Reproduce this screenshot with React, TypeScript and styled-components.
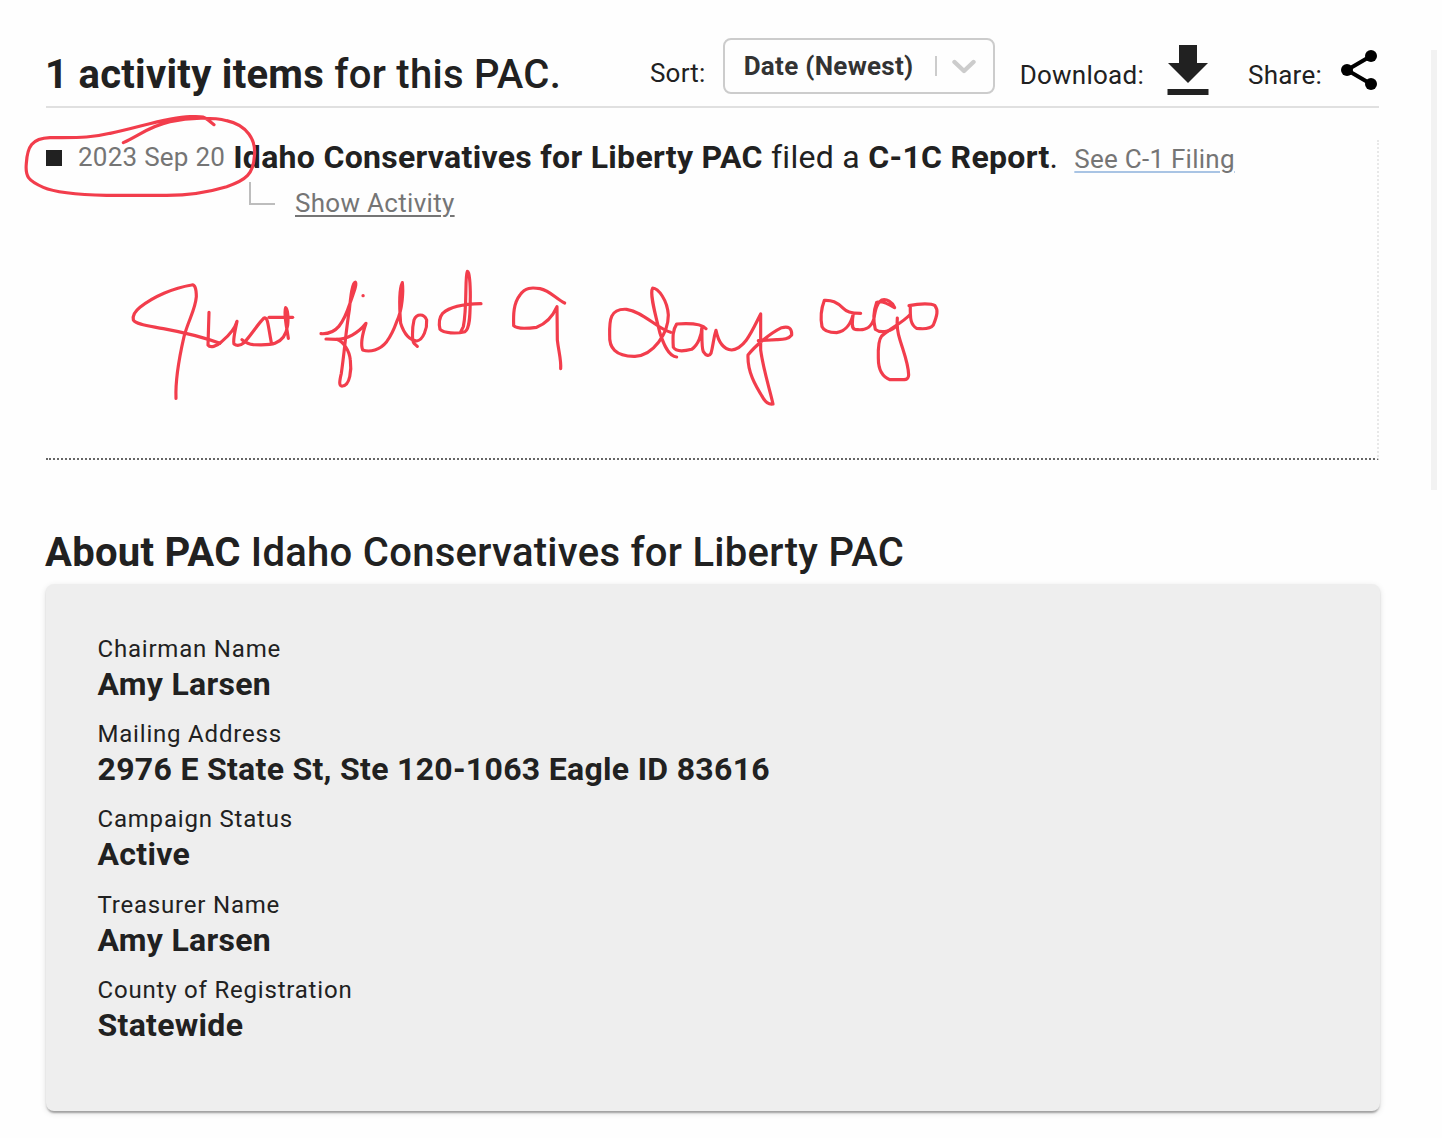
import styled, { createGlobalStyle } from "styled-components";

const details = [
  { label: "Chairman Name", value: "Amy Larsen" },
  { label: "Mailing Address", value: "2976 E State St, Ste 120-1063 Eagle ID 83616" },
  { label: "Campaign Status", value: "Active" },
  { label: "Treasurer Name", value: "Amy Larsen" },
  { label: "County of Registration", value: "Statewide" },
];

const Notes = () => (
  <NotesSvg viewBox="0 0 1442 500">
    {/* circle around the date */}
    <g transform="translate(0 30) scale(0.33333)">
      <path d="M370 338 C420 315 450 288 510 275 C570 262 640 262 680 272 C740 285 770 330 763 380 C760 430 740 450 680 470 C620 488 560 496 500 496 L320 496 C240 494 170 490 130 472 C85 452 75 440 79 400 C82 350 95 325 150 323 C220 322 270 325 330 310 C420 292 500 262 570 260 C615 258 612 260 642 284" />
    </g>
    {/* just filed */}
    <g transform="translate(120 260) scale(0.33333)">
      <path d="M168 415 C166 370 176 300 192 230 C205 180 226 150 229 110 C229 85 224 72 215 75 C160 84 100 110 60 142 C40 158 38 170 40 180 C48 194 90 198 130 206 C190 217 250 232 300 250" />
      <path d="M267 157 L264 255 C270 264 290 260 305 245 C325 228 345 205 351 184 C345 215 338 240 342 252 C350 258 362 256 372 248 C390 230 415 190 432 174 C444 172 443 190 454 248" />
      <path d="M366 239 C375 246 385 253 400 254 C430 255 450 256 465 250 C490 240 500 220 503 195 C506 170 502 145 497 143 C490 160 500 200 505 235" />
      <path d="M447 172 L518 172" />
      <path d="M603 221 C650 224 670 190 690 130 C700 100 712 72 706 66 C697 66 692 110 688 150 C678 210 674 270 664 340 C658 365 656 380 668 378 C690 376 695 330 691 300 C688 270 670 245 650 238 L618 237" />
      <path d="M650 238 C680 238 715 220 738 190 C728 220 720 250 728 270 C750 278 780 270 800 245 C812 228 822 208 830 185 C848 150 850 90 847 68 C836 90 838 140 842 190 C850 215 865 240 890 243 C910 240 922 205 920 180 C912 160 890 160 882 180 C876 205 876 245 882 250 L892 259" />
      <path d="M729 107 L729.5 107" />
    </g>
    {/* a */}
    <g transform="translate(390 260) scale(0.33333)">
      <path d="M273 131 C220 132 180 140 158 160 C146 175 146 190 150 208 C160 220 200 222 225 215 C242 205 240 150 241 110 C241 70 238 33 232 34 C224 50 232 140 220 200 L212 216" />
      <path d="M524 129 C500 118 480 92 450 86 C425 82 405 82 390 105 C370 130 370 165 371 197 C380 207 410 206 440 202 C470 190 490 165 501 140 L502 240 C506 275 514 300 512 326" />
    </g>
    {/* day ago */}
    <g transform="translate(660 260) scale(0.33333)">
      <path d="M32 217 C-10 205 -50 155 -100 148 C-150 145 -152 180 -151 225 C-153 262 -135 290 -75 289 C-20 287 25 220 25 165 C22 120 -5 85 -22 84 C-32 100 -15 160 0 220 C10 250 25 290 50 291" />
      <path d="M138 206 C125 190 80 190 50 192 C38 210 38 230 40 262 C48 276 75 273 95 268 C115 255 125 225 126 198 C126 225 124 260 130 275 C138 288 148 290 153 280 C160 255 160 235 168 211 C175 245 190 268 215 270 C255 265 275 215 302 162 L302 270 C310 330 330 390 339 432 C328 434 318 428 310 415 C285 375 262 335 264 285 C285 258 330 220 365 203 C385 198 396 203 395 225 C385 238 370 238 350 239 L295 242" />
      <path d="M602 160 C570 160 560 155 550 145 C530 125 515 120 493 121 C482 150 482 180 486 200 C492 215 510 218 530 218 C560 213 575 185 580 160 C576 185 573 205 585 208 C620 214 635 200 642 175 C646 150 650 130 665 120 C680 116 697 125 704 143 C690 135 665 120 650 127 C640 155 640 185 646 208 C660 220 690 215 704 203" />
      <path d="M712 174 C710 195 712 215 720 240 C732 280 745 310 746 345 C745 358 740 359 720 359 L690 359 C665 350 655 325 655 295 C654 265 655 240 665 228 C690 205 725 190 749 165" />
      <path d="M747 137 C780 130 815 130 825 137 C835 150 832 165 820 195 C810 208 785 207 770 205 C752 195 750 175 751 137" />
    </g>
  </NotesSvg>
);

const App = () => {
  return (
    <>
      <GlobalStyle />
      <Page>
        <Top>
          <Activity>
            <Header>
              <Title>
                <b>1 activity items</b> for this PAC.
              </Title>
              <Tools>
                <ToolLabel $shift={5}>Sort:</ToolLabel>
                <Select>
                  <span>Date (Newest)</span>
                  <Divider />
                  <svg width="24" height="16" viewBox="0 0 24 16">
                    <path d="M2.5 4 L12 13 L21.5 4" fill="none" stroke="#ccc" strokeWidth="4.4" strokeLinecap="round" strokeLinejoin="round" />
                  </svg>
                </Select>
                <ToolLabel $shift={7}>Download:</ToolLabel>
                <DownloadSvg viewBox="0 0 42 50">
                  <path d="M12 0 H30 V18 H41 L21 38 L1 18 H12 Z M0.5 44 H41.5 V50 H0.5 Z" fill="#212121" />
                </DownloadSvg>
                <ToolLabel $shift={7}>Share:</ToolLabel>
                <ShareSvg viewBox="0 0 36 40">
                  <path d="M30 6 L6 20 L30 34" fill="none" stroke="#000" strokeWidth="4" />
                  <circle cx="30" cy="6" r="6" />
                  <circle cx="6" cy="20" r="6" />
                  <circle cx="30" cy="34" r="6" />
                </ShareSvg>
              </Tools>
            </Header>
            <List>
              <Item>
                <Bullet />
                <ItemDate>2023 Sep 20</ItemDate>
                <Message>
                  <b>Idaho Conservatives for Liberty PAC</b> filed a <b>C-1C Report</b>.
                </Message>
                <FilingLink>See C-1 Filing</FilingLink>
              </Item>
              <SubItem>
                <Branch />
                <ShowLink>Show Activity</ShowLink>
              </SubItem>
            </List>
          </Activity>
          <Scrollbar />
        </Top>
        <AboutTitle>
          <b>About PAC</b> Idaho Conservatives for Liberty PAC
        </AboutTitle>
        <Card>
          {details.map((item) => (
            <Detail key={item.label}>
              <div className="label">{item.label}</div>
              <div className="value">{item.value}</div>
            </Detail>
          ))}
        </Card>
        <Notes />
      </Page>
    </>
  );
};

export default App;

const GlobalStyle = createGlobalStyle`
  * {
    box-sizing: border-box;
  }

  body {
    margin: 0;
    background: #fefefe;
    color: #212121;
    font-family: Roboto, "Liberation Sans", sans-serif;
  }

  b {
    font-weight: 700;
  }
`;

const Page = styled.main`
  position: relative;
  width: 1442px;
  height: 1138px;
  padding-left: 46px;
  overflow: hidden;
`;

const Top = styled.section`
  display: flex;
  gap: 52px;
  height: 490px;
`;

const Activity = styled.div`
  width: 1333px;
`;

const Header = styled.header`
  height: 108px;
  border-bottom: 2px solid #e0e0e0;

  display: flex;
  justify-content: space-between;
`;

const Title = styled.h1`
  margin: 43px 0 0 -1px;
  font-size: 40px;
  font-weight: 500;
  line-height: 64px;
  letter-spacing: 0.28px;
  white-space: nowrap;
`;

const Tools = styled.div`
  margin-top: 38px;
  display: flex;
  align-items: flex-start;
`;

const ToolLabel = styled.span<{ $shift: number }>`
  padding-top: ${(props) => props.$shift}px;
  font-size: 26px;
  line-height: 60px;
  letter-spacing: 0.25px;
`;

const Select = styled.div`
  width: 272px;
  height: 56px;
  margin: 0 25px 0 17px;
  padding-left: 19px;
  border: 2px solid #ccc;
  border-radius: 8px;

  display: flex;
  align-items: center;

  color: #333;
  font-size: 26px;
  font-weight: 700;
  letter-spacing: 0.3px;

  span {
    width: 177px;
    white-space: nowrap;
  }
`;

const Divider = styled.i`
  width: 2px;
  height: 20px;
  margin: 0 15px 0 14px;
  background: #ccc;
`;

const DownloadSvg = styled.svg`
  width: 42px;
  height: 50px;
  margin: 7px 39px 0 23px;
`;

const ShareSvg = styled.svg`
  width: 36px;
  height: 40px;
  margin: 12px 2px 0 19px;
`;

const List = styled.div`
  height: 320px;
  margin-top: 32px;
  border-right: 2px dotted #e8e8e8;
  border-bottom: 2px dotted #666;
`;

const Item = styled.div`
  height: 36px;
  display: flex;
  align-items: center;
  white-space: nowrap;
`;

const Bullet = styled.i`
  width: 16px;
  height: 16px;
  background: #212121;
`;

const ItemDate = styled.span`
  margin: -3px 8px 0 16px;
  color: #757575;
  font-size: 26px;
  letter-spacing: 0.25px;
`;

const Message = styled.span`
  font-size: 32px;
  letter-spacing: 0.3px;
  margin-top: -2px;
`;

const FilingLink = styled.a`
  margin: 2px 0 0 16px;
  color: #757575;
  font-size: 26px;
  letter-spacing: 0.25px;
  text-decoration: underline;
  text-decoration-color: #a9c4e4;
  text-decoration-thickness: 2px;
  text-underline-offset: 3px;
`;

const SubItem = styled.div`
  height: 50px;
  padding-left: 203px;
  display: flex;
`;

const Branch = styled.i`
  width: 26px;
  height: 23px;
  margin-top: 6px;
  border: solid #bdbdbd;
  border-width: 0 0 2px 2px;
`;

const ShowLink = styled.a`
  margin-left: 20px;
  color: #757575;
  font-size: 26px;
  line-height: 54px;
  letter-spacing: 0.3px;
  text-decoration: underline;
  text-decoration-thickness: 2px;
  text-underline-offset: 3px;
`;

const Scrollbar = styled.div`
  width: 6px;
  height: 440px;
  margin-top: 50px;
  background: #f2f2f2;
`;

const AboutTitle = styled.h2`
  height: 94px;
  margin: 0 0 0 -1px;
  padding-top: 31px;
  font-size: 40px;
  font-weight: 500;
  line-height: 64px;
  letter-spacing: 0.28px;
`;

const Card = styled.section`
  width: 1334px;
  height: 527px;
  margin-left: -0.5px;
  padding: 48px 52px;
  border-radius: 8px;
  background: #eee;
  box-shadow:
    0 4px 2px -2px rgba(0, 0, 0, 0.2),
    0 2px 2px rgba(0, 0, 0, 0.14),
    0 2px 6px rgba(0, 0, 0, 0.12);
`;

const Detail = styled.div`
  height: 85.2px;

  .label {
    font-size: 24px;
    line-height: 34px;
    letter-spacing: 0.8px;
  }

  .value {
    font-size: 32px;
    font-weight: 700;
    line-height: 36px;
    letter-spacing: 0.3px;
  }
`;

// red pen marks drawn over the page
const NotesSvg = styled.svg`
  position: absolute;
  top: 0;
  left: 0;
  width: 1442px;
  height: 500px;
  pointer-events: none;
  fill: none;
  stroke: #f23d4c;
  stroke-width: 9.5px;
  stroke-linecap: round;
  stroke-linejoin: round;
`;
